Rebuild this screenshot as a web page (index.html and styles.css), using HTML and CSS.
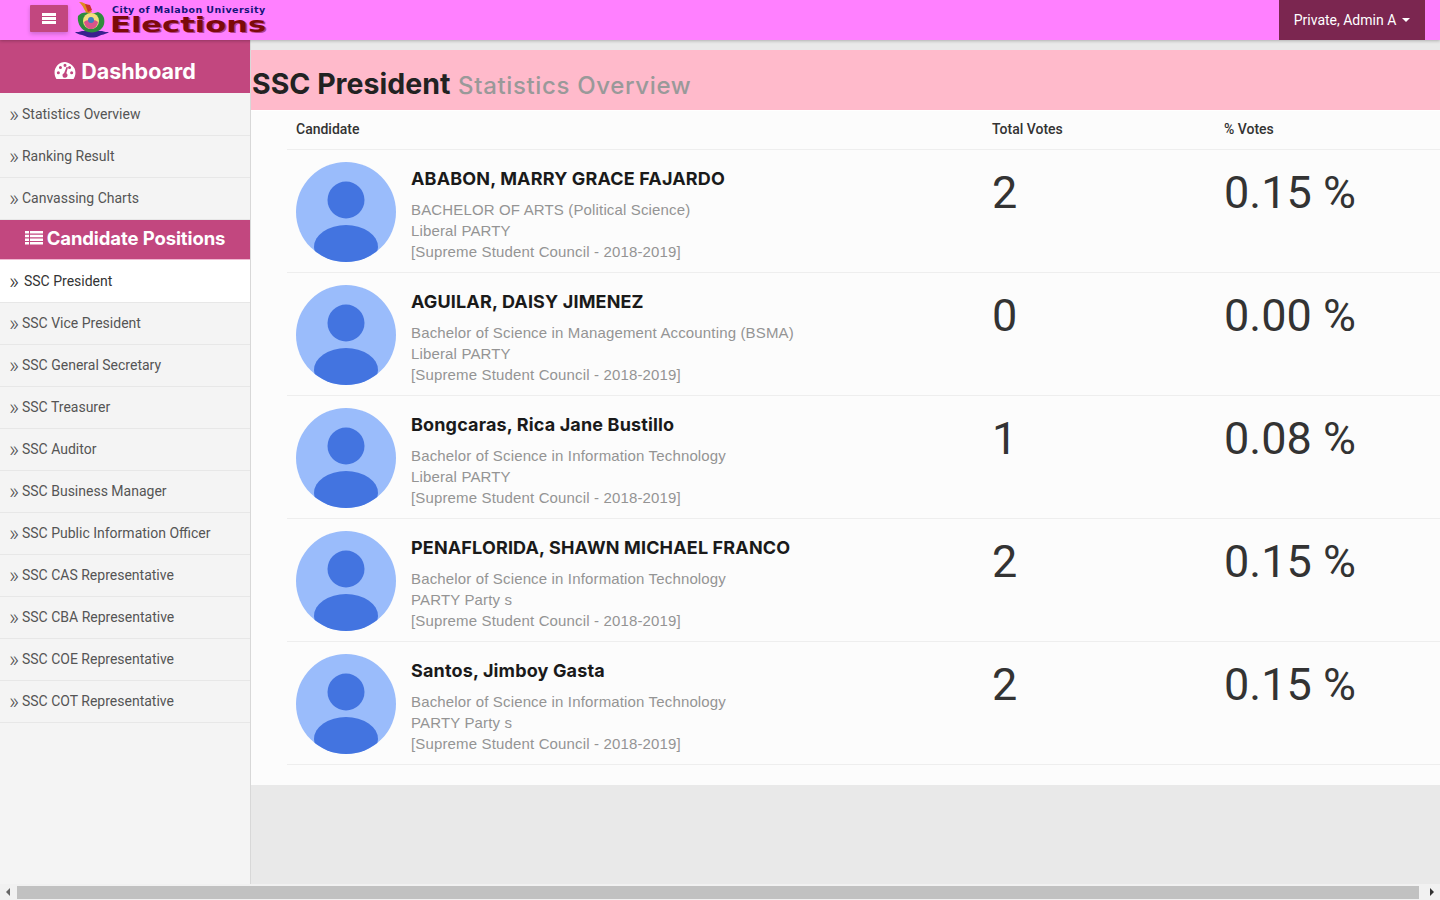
FILE: index.html
```html
<!DOCTYPE html>
<html lang="en">
<head>
<meta charset="utf-8">
<title>SSC President - Statistics Overview</title>
<link rel="stylesheet" href="styles.css">
</head>
<body>
<header class="topbar">
  <div class="brand">
    <button class="burger" aria-label="Menu"><span></span><span></span><span></span></button>
    <svg class="crest" viewBox="0 0 34 38" width="34" height="38">
      <path d="M4 1c4 0 8 2 10 5l3 5-5 2-3-5C8 5 6 3 4 1z" fill="#e08a1e"/>
      <path d="M10 3l5 1 2 5-4 2z" fill="#c8342b"/>
      <path d="M0 31c3 3 6 2 10 4 4 2 10 2 14 0 3-2 6-1 10-4-2 0-5 0-7-1H7c-2 1-5 1-7 1z" fill="#3a1f8f"/>
      <path d="M3 15c3-4 8-4 11-3 3 1 6 0 9-1 3 1 5 3 6 6 1 5 0 9-4 12-4 3-11 3-15 1-5-3-8-9-7-15z" fill="#2e8b3d"/>
      <ellipse cx="16" cy="20" rx="8" ry="8" fill="#f3dd7d"/>
      <path d="M9 21c3-3 11-3 14 0-1 5-4 7-7 7s-6-2-7-7z" fill="#d9558a"/>
      <circle cx="16" cy="19" r="3" fill="#3b7fbf"/>
    </svg>
    <div class="wordmark">
      <span class="wordmark-top">City of Malabon University</span>
      <span class="wordmark-main">Elections</span>
    </div>
  </div>
  <button class="user">Private, Admin A<i class="caret"></i></button>
</header>

<div class="shell">
  <aside class="sidebar">
    <h2 class="side-head">
      <svg viewBox="0 0 22 20" width="22" height="19"><path fill="#fff" fill-rule="evenodd" d="M11 1C5 1 0 6 0 12c0 2.500.7 4.900 2 7h18c1.300-2.100 2-4.500 2-7 0-6-5-10-11-11zM4 14a1.600 1.600 0 1 1 0-3.200A1.600 1.600 0 0 1 4 14zm2.200-5.500a1.600 1.600 0 1 1 0-3.200 1.600 1.600 0 0 1 0 3.200zM11 6.200a1.600 1.600 0 1 1 0-3.200 1.600 1.600 0 0 1 0 3.200zm2.700 8.800a2.700 2.700 0 1 1-3.600-2.500L12.500 6.500c.3-.6 1.800-.1 1.500.6l-1.600 5.800c.8.500 1.300 1.200 1.300 2.100zM15.800 8.500a1.600 1.600 0 1 1 0-3.200 1.600 1.600 0 0 1 0 3.200zM18 14a1.600 1.600 0 1 1 0-3.200A1.600 1.600 0 0 1 18 14z"/></svg>
      Dashboard
    </h2>
    <ul class="side-list side-list-first">
      <li class="side-item"><span class="chev">»</span>Statistics Overview</li>
      <li class="side-item"><span class="chev">»</span>Ranking Result</li>
      <li class="side-item"><span class="chev">»</span>Canvassing Charts</li>
    </ul>
    <h3 class="side-sub">
      <svg viewBox="0 0 18 14" width="18" height="14"><path fill="#fff" d="M0 0h4v2.500H0zM5 0h13v2.500H5zM0 3.700h4v2.500H0zM5 3.700h13v2.500H5zM0 7.400h4v2.500H0zM5 7.400h13v2.500H5zM0 11.100h4v2.500H0zM5 11.100h13v2.500H5z"/></svg>
      Candidate Positions
    </h3>
    <ul class="side-list">
      <li class="side-item is-active"><span class="chev">»</span>SSC President</li>
      <li class="side-item"><span class="chev">»</span>SSC Vice President</li>
      <li class="side-item"><span class="chev">»</span>SSC General Secretary</li>
      <li class="side-item"><span class="chev">»</span>SSC Treasurer</li>
      <li class="side-item"><span class="chev">»</span>SSC Auditor</li>
      <li class="side-item"><span class="chev">»</span>SSC Business Manager</li>
      <li class="side-item"><span class="chev">»</span>SSC Public Information Officer</li>
      <li class="side-item"><span class="chev">»</span>SSC CAS Representative</li>
      <li class="side-item"><span class="chev">»</span>SSC CBA Representative</li>
      <li class="side-item"><span class="chev">»</span>SSC COE Representative</li>
      <li class="side-item"><span class="chev">»</span>SSC COT Representative</li>
    </ul>
  </aside>

  <main class="main">
    <h1 class="page-title">SSC President <small>Statistics Overview</small></h1>
    <section class="panel">
      <div class="thead">
        <div>Candidate</div><div>Total Votes</div><div>% Votes</div>
      </div>

      <article class="row">
        <div class="cand">
          <svg class="avatar" viewBox="0 0 100 100"><defs><clipPath id="c1"><circle cx="50" cy="50" r="50"/></clipPath></defs><circle cx="50" cy="50" r="50" fill="#9abcfb"/><circle cx="50" cy="38" r="18.500" fill="#4374e0"/><ellipse cx="50" cy="85" rx="32" ry="22" fill="#4374e0" clip-path="url(#c1)"/></svg>
          <div class="info">
            <h4 class="name">ABABON, MARRY GRACE FAJARDO</h4>
            <p class="meta">BACHELOR OF ARTS (Political Science)</p>
            <p class="meta">Liberal PARTY</p>
            <p class="meta">[Supreme Student Council - 2018-2019]</p>
          </div>
        </div>
        <div class="num">2</div>
        <div class="num">0.15 %</div>
      </article>

      <article class="row">
        <div class="cand">
          <svg class="avatar" viewBox="0 0 100 100"><circle cx="50" cy="50" r="50" fill="#9abcfb"/><circle cx="50" cy="38" r="18.500" fill="#4374e0"/><ellipse cx="50" cy="85" rx="32" ry="22" fill="#4374e0" clip-path="url(#c1)"/></svg>
          <div class="info">
            <h4 class="name">AGUILAR, DAISY JIMENEZ</h4>
            <p class="meta">Bachelor of Science in Management Accounting (BSMA)</p>
            <p class="meta">Liberal PARTY</p>
            <p class="meta">[Supreme Student Council - 2018-2019]</p>
          </div>
        </div>
        <div class="num">0</div>
        <div class="num">0.00 %</div>
      </article>

      <article class="row">
        <div class="cand">
          <svg class="avatar" viewBox="0 0 100 100"><circle cx="50" cy="50" r="50" fill="#9abcfb"/><circle cx="50" cy="38" r="18.500" fill="#4374e0"/><ellipse cx="50" cy="85" rx="32" ry="22" fill="#4374e0" clip-path="url(#c1)"/></svg>
          <div class="info">
            <h4 class="name">Bongcaras, Rica Jane Bustillo</h4>
            <p class="meta">Bachelor of Science in Information Technology</p>
            <p class="meta">Liberal PARTY</p>
            <p class="meta">[Supreme Student Council - 2018-2019]</p>
          </div>
        </div>
        <div class="num">1</div>
        <div class="num">0.08 %</div>
      </article>

      <article class="row">
        <div class="cand">
          <svg class="avatar" viewBox="0 0 100 100"><circle cx="50" cy="50" r="50" fill="#9abcfb"/><circle cx="50" cy="38" r="18.500" fill="#4374e0"/><ellipse cx="50" cy="85" rx="32" ry="22" fill="#4374e0" clip-path="url(#c1)"/></svg>
          <div class="info">
            <h4 class="name">PENAFLORIDA, SHAWN MICHAEL FRANCO</h4>
            <p class="meta">Bachelor of Science in Information Technology</p>
            <p class="meta">PARTY Party s</p>
            <p class="meta">[Supreme Student Council - 2018-2019]</p>
          </div>
        </div>
        <div class="num">2</div>
        <div class="num">0.15 %</div>
      </article>

      <article class="row">
        <div class="cand">
          <svg class="avatar" viewBox="0 0 100 100"><circle cx="50" cy="50" r="50" fill="#9abcfb"/><circle cx="50" cy="38" r="18.500" fill="#4374e0"/><ellipse cx="50" cy="85" rx="32" ry="22" fill="#4374e0" clip-path="url(#c1)"/></svg>
          <div class="info">
            <h4 class="name">Santos, Jimboy Gasta</h4>
            <p class="meta">Bachelor of Science in Information Technology</p>
            <p class="meta">PARTY Party s</p>
            <p class="meta">[Supreme Student Council - 2018-2019]</p>
          </div>
        </div>
        <div class="num">2</div>
        <div class="num">0.15 %</div>
      </article>
    </section>
  </main>
</div>

<div class="hscroll">
  <span class="arrow arrow-left"></span>
  <span class="thumb"></span>
  <span class="arrow arrow-right"></span>
</div>
</body>
</html>
```
FILE: styles.css
```css
* { box-sizing: border-box; }
html, body { margin: 0; height: 100%; }
body {
  display: flex;
  flex-direction: column;
  height: 100vh;
  overflow: hidden;
  font-family: Roboto, "Liberation Sans", sans-serif;
  background: #e9e9e9;
  color: #333;
}
h1, h2, h3, h4, p, ul { margin: 0; padding: 0; }
ul { list-style: none; }

.topbar {
  position: relative;
  z-index: 2;
  flex: 0 0 40px;
  display: flex;
  justify-content: space-between;
  padding: 0 15px 0 30px;
  background: #ff80ff;
  box-shadow: 0 1px 3px rgba(0,0,0,.25);
}
.brand { display: flex; align-items: flex-start; }
.burger {
  width: 38px;
  height: 27px;
  margin-top: 5px;
  padding: 0;
  border: 0;
  border-radius: 1px;
  background: #c2477f;
  box-shadow: 0 2px 4px rgba(0,0,0,.2);
  display: flex;
  flex-direction: column;
  align-items: center;
  justify-content: center;
  gap: 1.500px;
}
.burger span { width: 14px; height: 2.500px; background: #fff; }
.crest { margin: 1px 0 0 7px; flex: none; }
.wordmark { display: flex; flex-direction: column; margin-left: 1px; }
.wordmark-top {
  font: 700 9.500px/10px "DejaVu Sans", sans-serif;
  letter-spacing: .45px;
  color: #14147a;
  margin: 5px 0 0 2px;
  white-space: nowrap;
}
.wordmark-main {
  font: 700 22px/19px "DejaVu Sans", sans-serif;
  color: #7c0a0a;
  text-shadow: 1px 1px 0 #b0408a;
  white-space: nowrap;
  transform: scaleX(1.39);
  transform-origin: left center;
}
.user {
  width: 146px;
  height: 40px;
  padding: 0;
  border: 0;
  background: #7b2650;
  color: #fff;
  font: 400 14px Roboto, sans-serif;
}
.caret {
  display: inline-block;
  margin-left: 6px;
  vertical-align: 3px;
  border-top: 4px solid #fff;
  border-left: 4px solid transparent;
  border-right: 4px solid transparent;
}

.shell { flex: 1; display: flex; min-height: 0; }
.sidebar {
  flex: 0 0 251px;
  background: #f4f4f4;
  border-right: 1px solid #d8d8d8;
}
.side-head {
  height: 53px;
  padding-top: 8px;
  display: flex;
  align-items: center;
  justify-content: center;
  gap: 5px;
  background: #c2477f;
  color: #fff;
  font: 700 21.500px Inter, sans-serif;
}
.side-list-first { margin-top: 1px; }
.side-item {
  height: 42px;
  display: flex;
  align-items: center;
  padding: 0 0 2px 9px;
  font-size: 14px;
  color: #555;
  border-bottom: 1px solid #e7e7e7;
}
.chev { font-size: 22px; line-height: 20px; margin-right: 3px; position: relative; top: 1px; font-weight: 300; }
.is-active { height: 43px; padding-bottom: 0; background: #fff; color: #333; }
.is-active .chev { margin-right: 5px; }
.side-sub {
  height: 40px;
  padding-bottom: 4px;
  display: flex;
  align-items: center;
  justify-content: center;
  gap: 4px;
  background: #c2477f;
  color: #fff;
  font: 700 18.500px Inter, sans-serif;
  letter-spacing: -.1px;
  border-bottom: 1px solid #f0b8d2;
}

.main { flex: 1; min-width: 0; padding-top: 10px; }
.page-title {
  height: 60px;
  padding-top: 15px;
  padding-left: 1px;
  background: #ffbacb;
  color: #222;
  font: 700 28.500px/38px Inter, sans-serif;
  white-space: nowrap;
}
.page-title small {
  font: 500 24px Inter, sans-serif;
  letter-spacing: .65px;
  color: #999;
  margin-left: 1px;
}
.panel {
  background: #fcfcfc;
  padding: 0 0 20px 36px;
  border-top: 1px solid #fff;
}
.thead, .row {
  display: grid;
  grid-template-columns: 696px 232px 1fr;
  border-bottom: 1px solid #eee;
}
.thead {
  height: 39px;
  padding-bottom: 2px;
  align-items: center;
  font-size: 14px;
  font-weight: 500;
  color: #333;
}
.thead > div { padding-left: 9px; }
.row { height: 123px; }
.cand { display: flex; padding: 12px 0 0 9px; }
.avatar { width: 100px; height: 100px; flex: none; }
.info { margin-left: 15px; }
.name {
  font: 700 18px/20px Inter, sans-serif;
  letter-spacing: .15px;
  color: #1a1a1a;
  margin: 7px 0 10px;
  white-space: nowrap;
}
.meta {
  font: 400 15px/21px "Liberation Sans", sans-serif;
  letter-spacing: .15px;
  color: #949494;
  white-space: nowrap;
}
.num {
  padding: 14px 0 0 9px;
  font: 400 45px/58px Roboto, sans-serif;
  color: #333;
}

.hscroll {
  flex: 0 0 16px;
  display: flex;
  align-items: center;
  background: #f1f1f1;
}
.thumb { flex: 1; height: 13px; background: #c1c1c1; margin: 0 5px 0 1px; }
.arrow { flex: 0 0 16px; height: 16px; display: flex; align-items: center; justify-content: center; }
.arrow::before { content: ""; border-top: 4px solid transparent; border-bottom: 4px solid transparent; }
.arrow-left::before { border-right: 4px solid #666; }
.arrow-right::before { border-left: 4px solid #333; }
```
